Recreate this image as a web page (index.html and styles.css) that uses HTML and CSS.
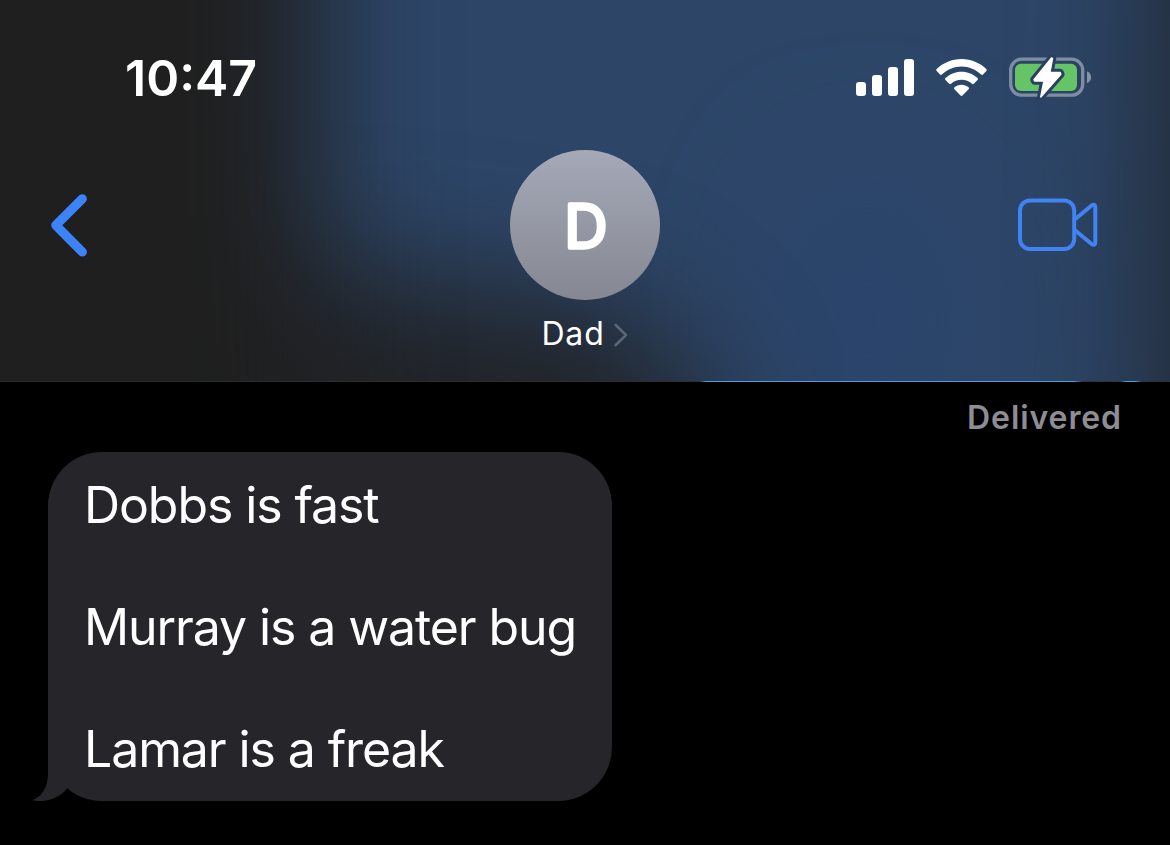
FILE: index.html
```html
<!DOCTYPE html>
<html lang="en">
<head>
    <meta charset="UTF-8">
    <meta name="viewport" content="width=device-width, initial-scale=1.0">
    <title>Dad - Messages</title>
    <link rel="stylesheet" href="styles.css">
</head>
<body>

<!-- Header -->
<header class="header">
    <svg class="backdrop" viewBox="0 0 1170 381" preserveAspectRatio="none">
        <defs>
            <filter id="soft" filterUnits="userSpaceOnUse" x="-500" y="-500" width="2200" height="1400" color-interpolation-filters="sRGB">
                <feGaussianBlur stdDeviation="62"/>
            </filter>
        </defs>
        <rect width="1170" height="381" fill="#2d4668"/>
        <ellipse cx="870" cy="320" rx="90" ry="150" fill="#2b446c" filter="url(#soft)"/>
        <path d="M150 260L400 275L610 305L705 390L720 900H150Z" fill="#212327" filter="url(#soft)"/>
        <path d="M-400-400H318V900H-400Z" fill="#1f1f1f" filter="url(#soft)"/>
        <path d="M1155-400H1600V900H1145Z" fill="#212832" filter="url(#soft)"/>
    </svg>

    <div class="status">
        <div class="time">10:47</div>
        <svg class="status-icons" width="236" height="44" viewBox="856 55 236 44">
            <g fill="#fff">
                <rect x="856" y="82" width="10" height="14" rx="3"/>
                <rect x="872" y="75" width="10" height="21" rx="3"/>
                <rect x="888" y="67" width="10" height="29" rx="3"/>
                <rect x="904" y="59" width="10" height="37" rx="3"/>
                <path d="M961.500 59c9.600 0 18.400 3.800 24.800 10.100.6.600.6 1.400 0 2l-3.300 3.500c-.6.600-1.300.6-1.900 0-5.200-5-12-8-19.600-8s-14.400 3-19.600 8c-.6.600-1.300.6-1.900 0l-3.300-3.500c-.6-.6-.6-1.400 0-2C943.100 62.800 951.900 59 961.500 59z"/>
                <path d="M961.500 71.800c6.200 0 11.800 2.400 16 6.300.6.600.6 1.400 0 2l-3.600 3.600c-.6.600-1.300.6-1.900.1-2.800-2.600-6.500-4.100-10.500-4.100s-7.700 1.500-10.500 4.100c-.6.500-1.300.5-1.900-.1l-3.600-3.600c-.6-.6-.6-1.400 0-2 4.200-3.900 9.800-6.300 16-6.300z"/>
                <path d="M961.500 84.700c2.700 0 5.100 1 7 2.600.7.600.7 1.400.1 2l-6.100 6.200c-.6.600-1.400.6-2 0l-6.100-6.200c-.6-.6-.6-1.400.1-2 1.900-1.600 4.300-2.600 7-2.600z"/>
            </g>
            <rect x="1010.700" y="59.200" width="72" height="36" rx="11" fill="none" stroke="#7f8da3" stroke-width="3.300"/>
            <path d="M1087 71.300c2.600 1.100 4.100 3.300 4.100 6s-1.500 4.900-4.100 6z" fill="#8692a5"/>
            <rect x="1015" y="63.700" width="62" height="27.300" rx="6" fill="#65c466"/>
            <path d="M1051.500 58L1034 79.700L1034.600 81H1044L1040.800 97L1060.800 74.200L1060.200 72.500H1049.800L1052.500 58.500Z" fill="#2a4060" stroke="#2a4060" stroke-width="7.500" stroke-linejoin="round"/>
            <path d="M1051.500 58L1034 79.700L1034.600 81H1044L1040.800 97L1060.800 74.200L1060.200 72.500H1049.800L1052.500 58.500Z" fill="#fff" stroke="#fff" stroke-width="1.500" stroke-linejoin="round"/>
        </svg>
    </div>

    <div class="nav">
        <svg class="back" width="44" height="70" viewBox="48 190 44 70">
            <path d="M82.300 198.800L55.800 225.300L82.300 252" fill="none" stroke="#3c83f7" stroke-width="9.200" stroke-linecap="round" stroke-linejoin="round"/>
        </svg>
        <svg class="avatar" width="150" height="150" viewBox="0 0 150 150">
            <defs>
                <linearGradient id="grey" x1="0" y1="0" x2="0" y2="1">
                    <stop offset="0" stop-color="#a5a9b8"/>
                    <stop offset="1" stop-color="#858891"/>
                </linearGradient>
            </defs>
            <circle cx="75" cy="75" r="75" fill="url(#grey)"/>
            <text class="initial" x="76" y="97.500" text-anchor="middle">D</text>
        </svg>
        <svg class="video" width="84" height="58" viewBox="1016 196 84 58">
            <g fill="none" stroke="#4083f3" stroke-width="4" stroke-linejoin="round">
                <rect x="1020" y="200.500" width="54.200" height="48.500" rx="10"/>
                <path d="M1075 219.300L1091.300 205.700Q1095.300 203 1095.300 207.500V242Q1095.300 246.500 1091.300 243.800L1075 230.200"/>
            </g>
        </svg>
    </div>

    <div class="contact">
        <span>Dad</span>
        <svg width="16" height="26" viewBox="612 322 16 26">
            <path d="M614.500 324.800L625 335L614.500 345.200" fill="none" stroke="#5b6675" stroke-width="2.600" stroke-linecap="round" stroke-linejoin="round"/>
        </svg>
    </div>
</header>
<div class="edge"></div>

<!-- Conversation -->
<main class="chat">
    <div class="delivered">Delivered</div>
    <div class="bubble">
        <p>Dobbs is fast</p>
        <p>Murray is a water bug</p>
        <p>Lamar is a freak</p>
        <svg class="tail" width="40" height="56" viewBox="30 745 40 56">
            <path d="M48 745V773C48 786 43 796 32.500 800.200C45 803 59 798.500 67 788.800L69 745Z" fill="#262529"/>
        </svg>
    </div>
</main>

</body>
</html>
```

FILE: styles.css
```css
* {
    box-sizing: border-box;
}
body {
    margin: 0;
    width: 1170px;
    height: 845px;
    overflow: hidden;
    background-color: #000000;
    color: #ffffff;
    font-family: Inter, "Liberation Sans", sans-serif;
}
svg {
    display: block;
}
.header {
    position: relative;
    height: 381px;
    overflow: hidden;
}
.backdrop {
    position: absolute;
    top: 0;
    left: 0;
    width: 100%;
    height: 100%;
    z-index: -1;
}
.status {
    display: flex;
    justify-content: space-between;
    height: 150px;
    padding: 48px 78px 0 125px;
}
.time {
    font-size: 50px;
    font-weight: 600;
    line-height: 60px;
}
.status-icons {
    margin-top: 7px;
}
.nav {
    display: flex;
    justify-content: space-between;
    align-items: center;
    height: 150px;
    padding: 0 70px 0 48px;
}
.avatar {
    margin-left: 62px;
}
.initial {
    font-size: 60px;
    font-weight: 400;
    fill: #ffffff;
    stroke: #ffffff;
    stroke-width: 3.5px;
    stroke-linejoin: round;
}
.contact {
    display: flex;
    justify-content: center;
    align-items: center;
    gap: 8px;
    height: 69px;
    font-size: 32px;
    letter-spacing: 0.8px;
}
.contact span {
    margin-top: -2px;
}
/* bottom line of the header, with the bubble showing under it */
.edge {
    height: 1px;
    background: linear-gradient(to right, #2b2d30 700px, #5d97dc 706px, #5d97dc 1074px, #2b3440 1082px, #2b3440 1120px, #5d97dc 1126px, #5d97dc 1135px, #2b3440 1142px);
}
.chat {
    padding: 16px 48px 0;
}
.delivered {
    height: 54px;
    line-height: 40px;
    text-align: right;
    font-size: 32px;
    font-weight: 600;
    letter-spacing: 0.9px;
    color: #8d8d93;
}
.bubble {
    position: relative;
    display: flex;
    flex-direction: column;
    gap: 61px;
    width: 564px;
    height: 349px;
    padding: 22.500px 37px 21px;
    border-radius: 54px;
    background-color: #262529;
    font-size: 50px;
    line-height: 61px;
    letter-spacing: -1.1px;
}
.bubble p {
    margin: 0 0 0 -1px;
    white-space: nowrap;
}
.tail {
    position: absolute;
    left: -18px;
    bottom: 0;
}
```
